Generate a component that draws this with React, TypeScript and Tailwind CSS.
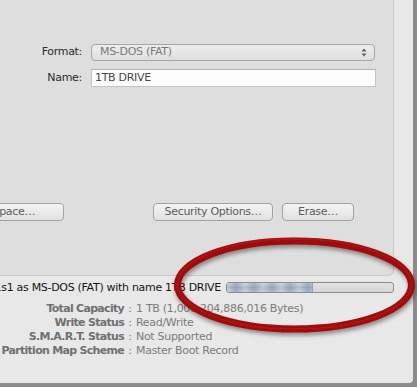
import React from "react";

function InfoRow({ label, value }: { label: string; value: string }) {
  return (
    <div className="flex items-center h-[14px] leading-[14px] whitespace-nowrap">
      <div className="w-[124px] text-right font-bold text-[#707070] tracking-[-0.7px]">{label}</div>
      <div className="w-[12px] text-center text-[#7a7a7a]">:</div>
      <div className="text-[#7c7c7c] tracking-[-0.3px]">{value}</div>
    </div>
  );
}

function Button({ children, className }: { children: React.ReactNode; className: string }) {
  return (
    <div
      className={
        "h-[18px] flex items-center justify-center rounded-[4px] border border-[#a3a3a3] bg-gradient-to-b from-[#f3f3f3] to-[#e1e1e1] text-[#5c5c5c] tracking-[-0.3px] whitespace-nowrap shrink-0 " +
        className
      }
    >
      {children}
    </div>
  );
}

export default function App() {
  return (
    <div className="relative w-[417px] h-[387px] bg-[#8b8b8b] overflow-hidden font-['DejaVu_Sans',sans-serif] text-[11px]">
      <div className="w-[413px] h-[383px] bg-[#e8e8e8] rounded-br-[4px] flex flex-col">
        {/* top panel */}
        <div className="w-[394px] h-[276px] bg-[#dedede] border-r border-b border-[#c8c8c8] rounded-br-[6px] flex flex-col pt-[44px] shrink-0">
          <div className="flex items-center h-[17px]">
            <div className="w-[82px] text-right text-[#2b2b2b] tracking-[-0.3px]">Format:</div>
            <div className="ml-[9px] w-[284px] h-[17px] rounded-[4px] border border-[#a6a6a6] bg-gradient-to-b from-[#ececec] to-[#dfdfdf] flex items-center pl-[8px] pr-[7px]">
              <span className="flex-1 text-[#7b7b7b] tracking-[-0.3px]">MS-DOS (FAT)</span>
              <svg width="6" height="9" viewBox="0 0 6 9">
                <path d="M0.5 3.5 L3 0.5 L5.5 3.5 Z" fill="#5e5e5e" />
                <path d="M0.5 5.5 L3 8.5 L5.5 5.5 Z" fill="#5e5e5e" />
              </svg>
            </div>
          </div>
          <div className="flex items-center h-[18px] mt-[8px]">
            <div className="w-[82px] text-right text-[#2b2b2b] tracking-[-0.3px]">Name:</div>
            <div className="ml-[9px] w-[285px] h-[18px] border border-[#c4c4c4] border-t-[#b4b4b4] bg-[#fdfdfd] flex items-center pl-[3px]">
              <span className="text-[#474747] tracking-[-0.3px]">1TB DRIVE</span>
            </div>
          </div>
          <div className="flex items-center mt-[116px]">
            <Button className="ml-[-94px] w-[158px]">Erase Free Space…</Button>
            <Button className="ml-[89px] w-[120px]">Security Options…</Button>
            <Button className="ml-[9px] w-[72px]">Erase…</Button>
          </div>
        </div>

        {/* status row */}
        <div className="flex items-center h-[11px] mt-[6px]">
          <div className="w-[221px] flex justify-end overflow-hidden whitespace-nowrap text-[#141414] tracking-[-0.3px] leading-[11px]">
            <span className="shrink-0">Erasing disk1s1 as MS-DOS (FAT) with name 1TB DRIVE</span>
          </div>
          <div className="ml-[5px] w-[168px] h-[11px] rounded-[3px] border border-[#8d8d8d] bg-gradient-to-b from-[#e2e2e2] to-[#d6d6d6] overflow-hidden flex shrink-0">
            <div className="w-[86px] h-full bg-gradient-to-b from-[#c9d2de] via-[#a9b6c9] to-[#c2ccda] border-r border-[#98a2b1] flex">
              <div className="w-full h-full bg-[repeating-linear-gradient(90deg,rgba(255,255,255,0.15)_0px,rgba(90,110,145,0.28)_9px,rgba(255,255,255,0.15)_18px)]" />
            </div>
          </div>
        </div>

        {/* info */}
        <div className="flex flex-col mt-[9px]">
          <InfoRow label="Total Capacity" value="1 TB (1,000,204,886,016 Bytes)" />
          <InfoRow label="Write Status" value="Read/Write" />
          <InfoRow label="S.M.A.R.T. Status" value="Not Supported" />
          <InfoRow label="Partition Map Scheme" value="Master Boot Record" />
        </div>
      </div>

      {/* red annotation ellipse */}
      <svg className="absolute inset-0 pointer-events-none" width="417" height="387" viewBox="0 0 417 387">
        <defs>
          <filter id="sh" x="-20%" y="-40%" width="140%" height="180%">
            <feDropShadow dx="1" dy="3" stdDeviation="2" floodColor="#000" floodOpacity="0.4" />
          </filter>
        </defs>
        <g filter="url(#sh)">
          <ellipse cx="294.5" cy="285" rx="117" ry="44" fill="none" stroke="#9c0a0a" strokeWidth="7" />
          <ellipse cx="294.5" cy="284" rx="117" ry="45" fill="none" stroke="#b81818" strokeWidth="2" opacity="0.6" />
        </g>
      </svg>
    </div>
  );
}
